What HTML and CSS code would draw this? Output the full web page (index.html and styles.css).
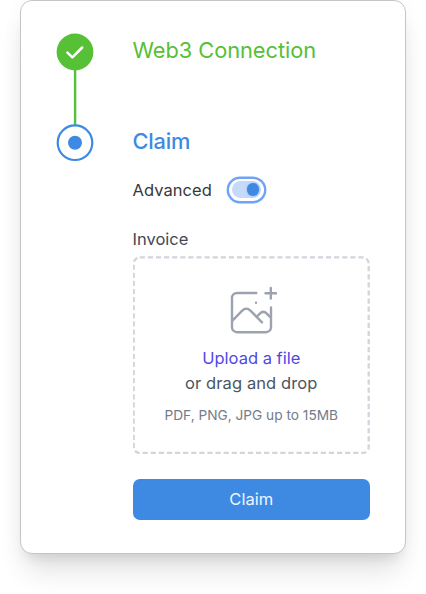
FILE: index.html
```html
<!DOCTYPE html>
<html lang="en">
<head>
<meta charset="utf-8">
<title>Claim</title>
<link rel="stylesheet" href="styles.css">
</head>
<body>
<main class="card">
  <div class="rail">
    <svg class="marker" viewBox="0.5 0.5 37 37"><circle cx="18.5" cy="18.5" r="18.4" fill="#56c037"/><path d="M10.9 19.1 15.9 23.8 25.7 14" fill="none" stroke="#fff" stroke-width="2.5" stroke-linecap="round" stroke-linejoin="round"/></svg>
    <svg class="line" viewBox="0 0 4 54"><path d="M1.1 -1V55" stroke="#56c037" stroke-width="2.4"/></svg>
    <svg class="marker" viewBox="0.5 0.8 37 37"><circle cx="18.5" cy="18.5" r="17.3" fill="#fff" stroke="#3e8ae3" stroke-width="2.2"/><circle cx="18.5" cy="18.5" r="7" fill="#3e8ae3"/></svg>
  </div>
  <div class="content">
    <h2 class="step done"><span>Web3 Connection</span></h2>
    <h2 class="step active"><span>Claim</span></h2>
    <div class="advanced">
      <span class="advanced-label">Advanced</span>
      <span class="switch" role="switch" aria-checked="true"><span class="track"><span class="knob"></span></span></span>
    </div>
    <div class="label"><span>Invoice</span></div>
    <div class="dropzone">
      <svg class="outline" viewBox="0 0 238 198"><rect x="0.7" y="1.4" width="235" height="195.6" rx="6" fill="none" stroke="#d2d5db" stroke-width="2.3" stroke-dasharray="5.2 2.9"/></svg>
      <svg class="picture" viewBox="0 0 48 48" fill="none" stroke="#9ca3af" stroke-width="2.4" stroke-linecap="round" stroke-linejoin="round"><path d="M27.3 7H8a5 5 0 0 0-5 5v29.2a5 5 0 0 0 5 5h29a5 5 0 0 0 5-5V21.5M41.8 2v10.6M36.5 7.3h10.6M3 35.2l10.2-10.5c2.8-2.8 5.5-2.8 8.2 0L33 36.3M27.5 31l3.3-3.4c2.3-2.2 4.8-2.2 7 0l4 4M27 16.7h.02"/></svg>
      <a class="upload">Upload a file</a>
      <span class="drag">or drag and drop</span>
      <span class="hint">PDF, PNG, JPG up to 15MB</span>
    </div>
    <button class="submit"><span>Claim</span></button>
  </div>
</main>
</body>
</html>
```
FILE: styles.css
```css
* { box-sizing: border-box; }
body {
  margin: 0;
  height: 594px;
  overflow: hidden;
  background: #fff;
  font-family: Inter, "Liberation Sans", sans-serif;
}
.card {
  display: flex;
  gap: 38.5px;
  width: 386px;
  height: 554px;
  margin-left: 20px;
  padding: 33px 35px 0 36px;
  border: 1px solid #c4c5c5;
  border-radius: 12px;
  background: #fff;
  box-shadow: 0 23px 28px -6px rgba(0,0,0,.11), 0 9px 12px -6px rgba(0,0,0,.09), 0 4px 22px rgba(0,0,0,.04);
}
.rail { display: flex; flex-direction: column; align-items: center; flex: 0 0 36px; }
.marker { display: block; width: 37px; height: 37px; flex: none; overflow: visible; position: relative; z-index: 1; }
.line { display: block; width: 4px; height: 54px; flex: none; overflow: visible; }
.content { width: 237.5px; flex: none; white-space: nowrap; }
.step { margin: 0; line-height: 33px; font-size: 21.8px; font-weight: 400; }
.done { height: 91px; color: #56c037; letter-spacing: -.05px; }
.active { height: 47px; color: #3e8ae3; font-weight: 500; letter-spacing: -.2px; }
.advanced { display: flex; align-items: center; height: 35px; gap: 17.6px; }
.advanced-label { width: 79px; font-size: 16.5px; letter-spacing: .05px; color: #383838; }
.switch { display: flex; width: 34.8px; height: 22px; padding: 2.5px; border-radius: 14px; box-shadow: 0 0 0 2.4px #70a3f5; }
.track { flex: 1; display: flex; align-items: center; justify-content: flex-end; padding-right: 2px; border-radius: 9px; background: #c5dafa; }
.knob { width: 12.5px; height: 12.5px; border-radius: 50%; background: #3e8ae3; box-shadow: 0 0 2px #7faaf0; }
.label { height: 49px; padding-top: 20px; line-height: 24px; font-size: 16.5px; color: #414957; }
.dropzone { position: relative; height: 198px; padding: 30px 0 0; display: flex; flex-direction: column; align-items: center; }
.outline { position: absolute; inset: 0; width: 238px; height: 198px; }
.picture { width: 48px; height: 48px; margin: 0 0 12px 3.6px; }
.upload, .drag { font-size: 16.5px; line-height: 25px; color: #5048e5; }
.drag { color: #4b5563; letter-spacing: .1px; }
.hint { margin-top: 8px; font-size: 13.7px; line-height: 22px; color: #747b89; }
.submit { display: block; width: 100%; height: 41.5px; margin-top: 24.6px; padding: 0; border: 0; border-radius: 7px; background: #3e8ae3; color: #edf5ff; font: 400 16.5px/41px Inter, "Liberation Sans", sans-serif; }
```
